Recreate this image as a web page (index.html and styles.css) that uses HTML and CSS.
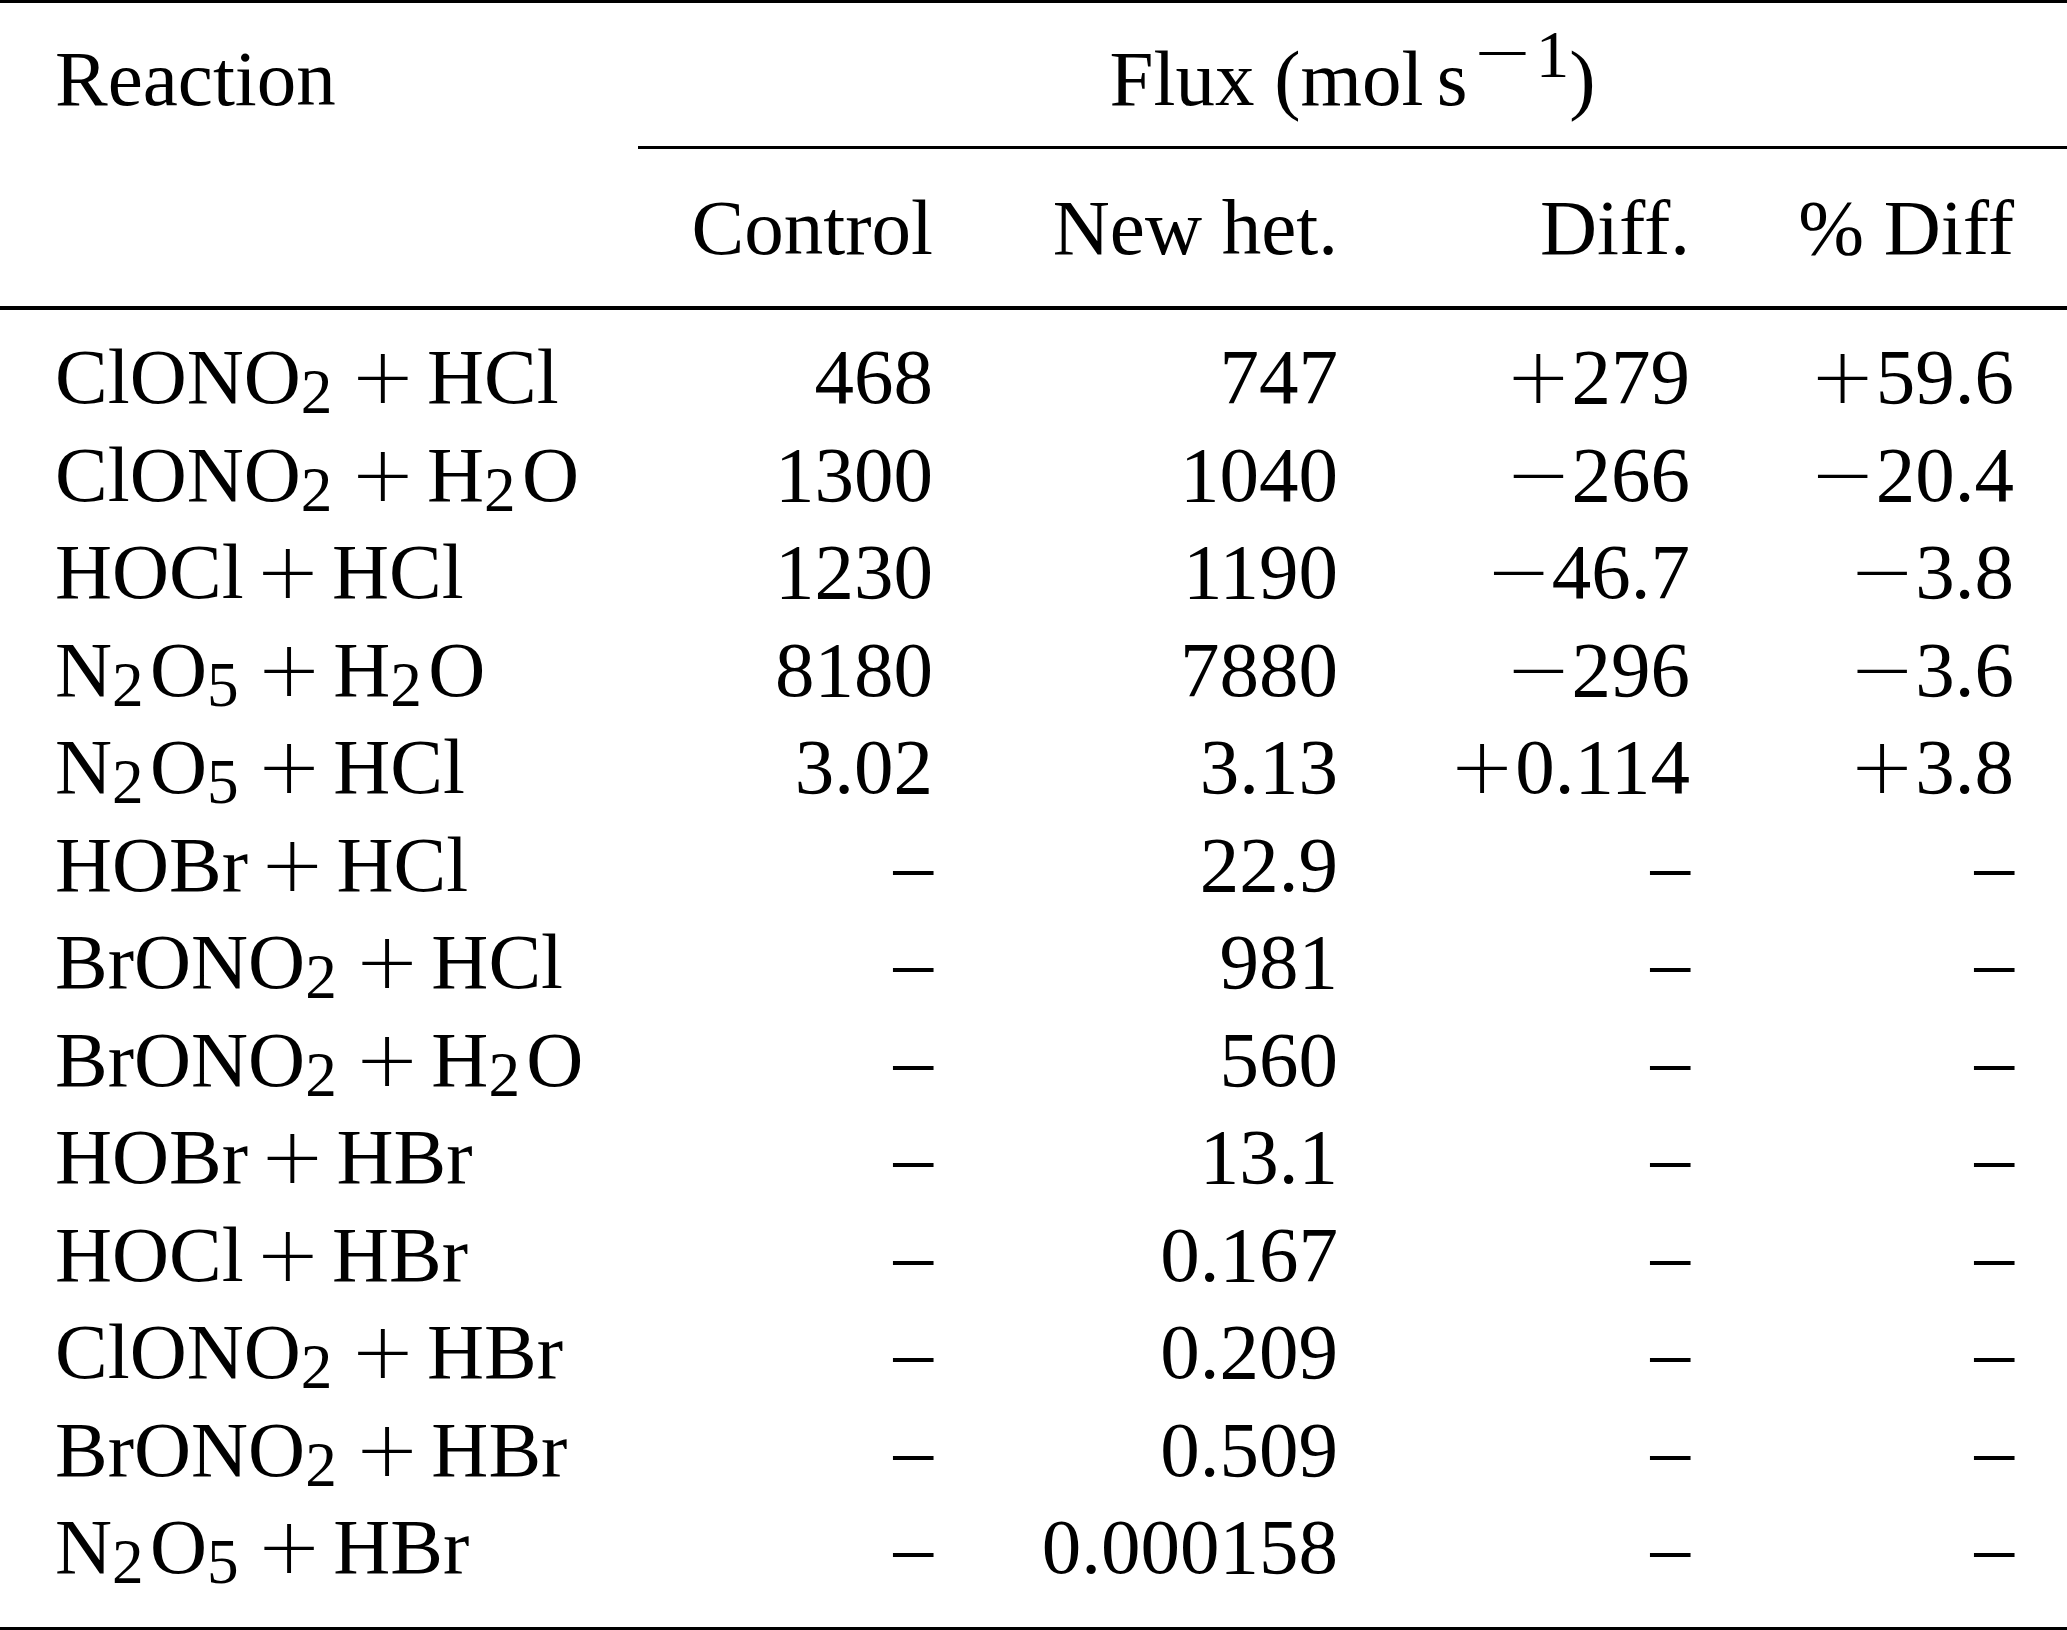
FILE: index.html
```html
<!DOCTYPE html>
<html>
<head>
<meta charset="utf-8">
<link rel="stylesheet" href="styles.css">
</head>
<body>
<table class="flux">
  <colgroup>
    <col class="c-react">
    <col class="c-ctrl">
    <col class="c-new">
    <col class="c-diff">
    <col class="c-pct">
  </colgroup>
  <thead>
    <tr class="h1">
      <th class="react">Reaction</th>
      <th class="group" colspan="4">Flux (mol<span class="thin"></span>s<sup><span class="supminus">−</span>1</sup>)</th>
    </tr>
    <tr class="h2">
      <th class="react"></th>
      <th class="num">Control</th>
      <th class="num">New het.</th>
      <th class="num">Diff.</th>
      <th class="num last">% Diff</th>
    </tr>
  </thead>
  <tbody>
    <tr class="first">
      <td class="react">ClONO<sub>2</sub><span class="op">+</span>HCl</td>
      <td class="num">468</td><td class="num">747</td><td class="num"><span class="sign">+</span>279</td><td class="num last"><span class="sign">+</span>59.6</td>
    </tr>
    <tr>
      <td class="react">ClONO<sub>2</sub><span class="op">+</span>H<sub>2</sub>O</td>
      <td class="num">1300</td><td class="num">1040</td><td class="num"><span class="sign">−</span>266</td><td class="num last"><span class="sign">−</span>20.4</td>
    </tr>
    <tr>
      <td class="react">HOCl<span class="op">+</span>HCl</td>
      <td class="num">1230</td><td class="num">1190</td><td class="num"><span class="sign">−</span>46.7</td><td class="num last"><span class="sign">−</span>3.8</td>
    </tr>
    <tr>
      <td class="react">N<sub>2</sub>O<sub>5</sub><span class="op">+</span>H<sub>2</sub>O</td>
      <td class="num">8180</td><td class="num">7880</td><td class="num"><span class="sign">−</span>296</td><td class="num last"><span class="sign">−</span>3.6</td>
    </tr>
    <tr>
      <td class="react">N<sub>2</sub>O<sub>5</sub><span class="op">+</span>HCl</td>
      <td class="num">3.02</td><td class="num">3.13</td><td class="num"><span class="sign">+</span>0.114</td><td class="num last"><span class="sign">+</span>3.8</td>
    </tr>
    <tr>
      <td class="react">HOBr<span class="op">+</span>HCl</td>
      <td class="num">–</td><td class="num">22.9</td><td class="num">–</td><td class="num last">–</td>
    </tr>
    <tr>
      <td class="react">BrONO<sub>2</sub><span class="op">+</span>HCl</td>
      <td class="num">–</td><td class="num">981</td><td class="num">–</td><td class="num last">–</td>
    </tr>
    <tr>
      <td class="react">BrONO<sub>2</sub><span class="op">+</span>H<sub>2</sub>O</td>
      <td class="num">–</td><td class="num">560</td><td class="num">–</td><td class="num last">–</td>
    </tr>
    <tr>
      <td class="react">HOBr<span class="op">+</span>HBr</td>
      <td class="num">–</td><td class="num">13.1</td><td class="num">–</td><td class="num last">–</td>
    </tr>
    <tr>
      <td class="react">HOCl<span class="op">+</span>HBr</td>
      <td class="num">–</td><td class="num">0.167</td><td class="num">–</td><td class="num last">–</td>
    </tr>
    <tr>
      <td class="react">ClONO<sub>2</sub><span class="op">+</span>HBr</td>
      <td class="num">–</td><td class="num">0.209</td><td class="num">–</td><td class="num last">–</td>
    </tr>
    <tr>
      <td class="react">BrONO<sub>2</sub><span class="op">+</span>HBr</td>
      <td class="num">–</td><td class="num">0.509</td><td class="num">–</td><td class="num last">–</td>
    </tr>
    <tr class="final">
      <td class="react">N<sub>2</sub>O<sub>5</sub><span class="op">+</span>HBr</td>
      <td class="num">–</td><td class="num">0.000158</td><td class="num">–</td><td class="num last">–</td>
    </tr>
  </tbody>
</table>
</body>
</html>
```

FILE: styles.css
```css
html, body {
  margin: 0;
  padding: 0;
  background: #ffffff;
}

body {
  width: 2067px;
  height: 1630px;
  overflow: hidden;
  font-family: "Liberation Serif", "Times New Roman", serif;
  font-size: 79px;
  color: #000000;
}

.flux {
  width: 2067px;
  table-layout: fixed;
  border-collapse: separate;
  border-spacing: 0;
  border-top: 3px solid #000;
  border-bottom: 4px solid #000;
}

.c-react { width: 638px; }
.c-ctrl  { width: 335px; }
.c-new   { width: 405px; }
.c-diff  { width: 352px; }
.c-pct   { width: 337px; }

th, td {
  font-weight: normal;
  padding: 0 40px 0 0;
  line-height: 97.5px;
  white-space: nowrap;
  vertical-align: baseline;
}

.react {
  text-align: left;
  padding-left: 55px;
}

.num { text-align: right; }
.num.last { padding-right: 53px; }

.h1 th {
  padding-top: 27px;
  padding-bottom: 18px;
}

.h1 .group {
  text-align: center;
  padding-right: 0;
  border-bottom: 3px solid #000;
}

.h2 th {
  padding-top: 30px;
  padding-bottom: 30px;
  border-bottom: 4px solid #000;
}

.first td { padding-top: 18px; }
.final td { padding-bottom: 31px; }

sub {
  font-size: 0.8em;
  line-height: 0;
  vertical-align: -0.16em;
  margin-right: 0.1em;
}

sup {
  font-size: 0.85em;
  line-height: 0;
  vertical-align: 0.42em;
  margin-left: 0.06em;
}

.supminus,
.op,
.sign {
  font-family: "DejaVu Sans", "Liberation Serif", sans-serif;
  font-weight: 200;
  line-height: 0;
}

.supminus {
  font-size: 1.1em;
  margin-right: 0.03em;
}

.thin {
  display: inline-block;
  width: 0.17em;
}

.op {
  margin: 0 0.14em;
}
```
